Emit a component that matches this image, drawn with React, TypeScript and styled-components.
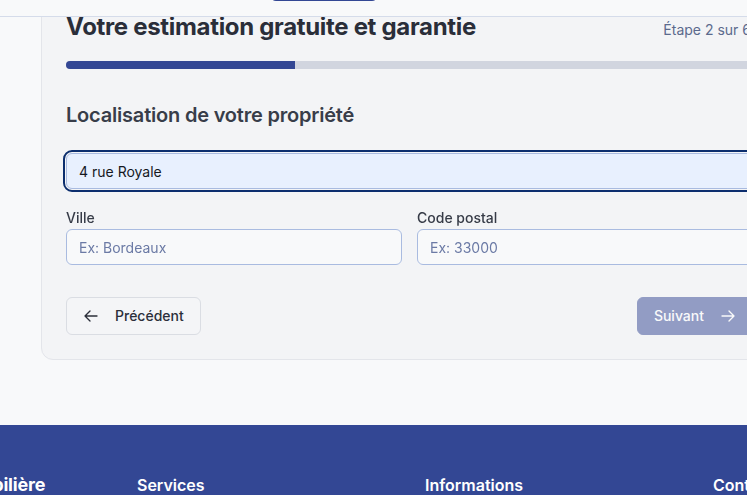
import React from "react";
import styled, { createGlobalStyle } from "styled-components";

const GlobalStyle = createGlobalStyle`
  html, body { margin: 0; padding: 0; }
  body {
    background: #f8f9fa;
    font-family: Inter, "Noto Sans", Roboto, sans-serif;
    overflow: hidden;
    -webkit-font-smoothing: antialiased;
  }
  * { box-sizing: border-box; }
`;

const Page = styled.div`
  width: 747px;
  min-height: 495px;
  display: flex;
  flex-direction: column;
`;

const TopBar = styled.header`
  position: relative;
  z-index: 2;
  height: 17px;
  padding: 0 0 15px 270px;
  display: flex;
  align-items: flex-end;
  background: #f8f9fa;
  border-bottom: 1px solid #d5dcea;
  overflow: hidden;
`;

const NavButton = styled.button`
  flex: none;
  width: 108px;
  height: 40px;
  border: none;
  border-radius: 6px;
  background: #334794;
`;

const Main = styled.main`
  position: relative;
  z-index: 1;
  margin-top: -31px;
  padding: 0 0 65px 41px;
`;

const Card = styled.section`
  width: 737px;
  background: #f3f4f6;
  border: 1px solid #e3e5ea;
  border-radius: 12px;
  padding: 24px 24px 24px;
  display: flex;
  flex-direction: column;
`;

const TitleRow = styled.div`
  display: flex;
  justify-content: space-between;
  align-items: center;
`;

const Title = styled.h1`
  margin: 0;
  font-size: 24px;
  line-height: 32px;
  font-weight: 700;
  color: #2a2e39;
  letter-spacing: -0.32px;
`;

const Step = styled.span`
  margin: 5px 2px 0 0;
  font-size: 14px;
  line-height: 20px;
  color: #5b6a8d;
`;

const Track = styled.div`
  margin-top: 18px;
  height: 8px;
  border-radius: 4px;
  background: #d1d5df;
  overflow: hidden;
`;

const Fill = styled.div`
  height: 100%;
  background: #334794;
`;

const SectionTitle = styled.h2`
  margin: 32px 0 0;
  font-size: 20px;
  line-height: 28px;
  font-weight: 600;
  letter-spacing: -0.2px;
  color: #383d49;
`;

const TextInput = styled.input<{ $autofilled?: boolean }>`
  display: block;
  width: 100%;
  height: 36px;
  padding: 0 12px;
  border: 1px solid #a9bbe0;
  border-radius: 6px;
  background: ${(p) => (p.$autofilled ? "#e8f0fe" : "#f8f9fa")};
  font-family: inherit;
  font-size: 14px;
  color: #15181f;
  caret-color: #15181f;
  outline: ${(p) => (p.$autofilled ? "2px solid #0c2e6e" : "none")};
  outline-offset: 1px;
  &::placeholder { color: #6b7aa5; }
`;

const AddressInput = styled(TextInput)`
  margin-top: 24px;
`;

const FieldGrid = styled.div`
  margin-top: 19px;
  display: grid;
  grid-template-columns: 1fr 1fr;
  gap: 15px;
`;

const Field = styled.label`
  display: flex;
  flex-direction: column;
  gap: 1px;
`;

const LabelText = styled.span`
  font-size: 14px;
  line-height: 20px;
  font-weight: 500;
  color: #363b47;
`;

const Actions = styled.div`
  margin-top: 32px;
  display: flex;
  justify-content: space-between;
`;

const Button = styled.button<{ $primary?: boolean }>`
  height: 38px;
  padding: 0 16px;
  display: inline-flex;
  align-items: center;
  gap: 16px;
  border-radius: 6px;
  border: 1px solid ${(p) => (p.$primary ? "#334794" : "#dadde3")};
  background: ${(p) => (p.$primary ? "#334794" : "#f4f5f7")};
  color: ${(p) => (p.$primary ? "#ffffff" : "#2b2f3a")};
  font-family: inherit;
  font-size: 14px;
  line-height: 20px;
  font-weight: 500;
  &:disabled { opacity: 0.5; }
`;

const Footer = styled.footer`
  flex: 1;
  background: #334794;
  padding-top: 48px;
  overflow: hidden;
`;

const FooterGrid = styled.div`
  margin-left: -151px;
  display: grid;
  grid-template-columns: repeat(4, 256px);
  column-gap: 32px;
  align-items: baseline;
`;

const FooterHeading = styled.h3<{ $brand?: boolean }>`
  margin: 0;
  white-space: nowrap;
  color: #ffffff;
  font-size: ${(p) => (p.$brand ? "18px" : "16px")};
  line-height: 24px;
  letter-spacing: ${(p) => (p.$brand ? "-0.2px" : "0")};
  font-weight: ${(p) => (p.$brand ? 700 : 600)};
`;

const Arrow = ({ dir }: { dir: "left" | "right" }) => (
  <svg width="16" height="16" viewBox="0 0 24 24" fill="none" stroke="currentColor" strokeWidth="2" strokeLinecap="round" strokeLinejoin="round">
    {dir === "left" ? (
      <path d="M10.5 19.5 3 12m0 0 7.5-7.5M3 12h18" />
    ) : (
      <path d="M13.5 4.5 21 12m0 0-7.5 7.5M21 12H3" />
    )}
  </svg>
);

export default function App() {
  const step = 2;
  const total = 6;
  return (
    <>
      <GlobalStyle />
      <Page>
        <TopBar>
          <NavButton aria-label="Menu" />
        </TopBar>
        <Main>
          <Card>
            <TitleRow>
              <Title>Votre estimation gratuite et garantie</Title>
              <Step>Étape {step} sur {total}</Step>
            </TitleRow>
            <Track>
              <Fill style={{ width: `${(step / total) * 100}%` }} />
            </Track>
            <SectionTitle>Localisation de votre propriété</SectionTitle>
            <AddressInput $autofilled defaultValue="4 rue Royale" autoFocus />
            <FieldGrid>
              <Field>
                <LabelText>Ville</LabelText>
                <TextInput placeholder="Ex: Bordeaux" />
              </Field>
              <Field>
                <LabelText>Code postal</LabelText>
                <TextInput placeholder="Ex: 33000" />
              </Field>
            </FieldGrid>
            <Actions>
              <Button>
                <Arrow dir="left" />
                Précédent
              </Button>
              <Button $primary disabled>
                Suivant
                <Arrow dir="right" />
              </Button>
            </Actions>
          </Card>
        </Main>
        <Footer>
          <FooterGrid>
            <FooterHeading $brand>Estimation Immobilière</FooterHeading>
            <FooterHeading>Services</FooterHeading>
            <FooterHeading>Informations</FooterHeading>
            <FooterHeading>Contact</FooterHeading>
          </FooterGrid>
        </Footer>
      </Page>
    </>
  );
}
